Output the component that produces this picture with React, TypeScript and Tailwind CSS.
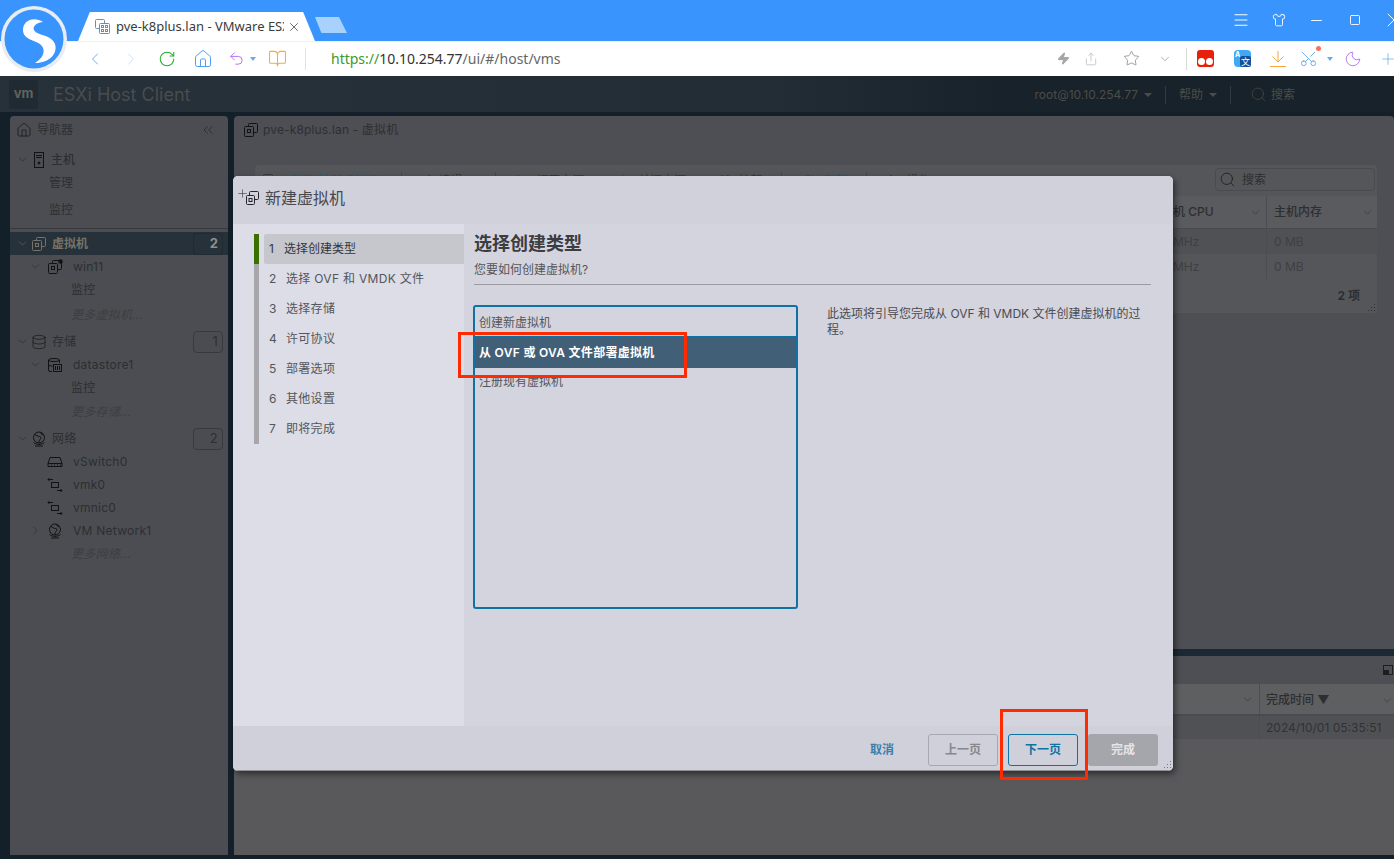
import type { ReactNode } from "react";
import { ChevronDown, ChevronRight, ChevronLeft, RotateCw, House, BookOpen, Undo2, Zap, Share, Star, Scissors, Moon, Plus, Menu, Shirt, Minus, Square, X, Search, ChevronsLeft, Database, Play, Pencil, Pause, Power } from "lucide-react";

const sans = "font-['Inter','Noto_Sans_CJK_SC',sans-serif]";

function VmIcon({ dot, size = 16 }: { dot?: boolean; size?: number }) {
  return (
    <svg width={size} height={size} viewBox="0 0 16 16" fill="none" stroke="currentColor" strokeWidth="1" className="shrink-0">
      <path d="M5.5 4V2.5a1 1 0 0 1 1-1h7a1 1 0 0 1 1 1v7a1 1 0 0 1-1 1H11" />
      <rect x="1.5" y="4.5" width="9" height="10" rx="1" />
      <rect x="4.5" y="7.5" width="3" height="3" />
      {dot && <circle cx="13.5" cy="2.5" r="2.2" fill="currentColor" stroke="none" />}
    </svg>
  );
}

function HostIcon() {
  return (
    <svg width="16" height="16" viewBox="0 0 16 16" fill="none" stroke="currentColor" strokeWidth="1" className="shrink-0">
      <rect x="3.5" y="0.5" width="9" height="15" />
      <path d="M5 3.5h6M5 5.5h6" />
      <circle cx="8" cy="11" r="1" fill="currentColor" />
    </svg>
  );
}

function GlobeIcon() {
  return (
    <svg width="16" height="16" viewBox="0 0 16 16" fill="none" stroke="currentColor" strokeWidth="1" className="shrink-0">
      <circle cx="8" cy="6.5" r="5.5" />
      <path d="M3.5 3.5c2 .5 3 2 5 2s1.5 2 .5 3-1 2-1 3.5M10 1.5c-.5 1 .5 2 2 2.5" />
      <path d="M2.5 11.5c3 2.5 8 2.5 11 0M4 15h8" />
    </svg>
  );
}

function DatastoreIcon() {
  return (
    <svg width="16" height="16" viewBox="0 0 16 16" fill="none" stroke="currentColor" strokeWidth="1" className="shrink-0">
      <path d="M5 14.5H3a1.5 1.5 0 0 1-1.5-1.5V3C1.500 1 12.500 1 12.500 3v3" />
      <path d="M1.500 3c0 2 11 2 11 0M1.500 7.500c0 1 2 1.500 4 1.700" />
      <rect x="6.500" y="7.500" width="8" height="7" />
      <path d="M8.500 9v4M10.500 9v4M12.500 9v4" />
    </svg>
  );
}

function PortIcon() {
  return (
    <svg width="16" height="16" viewBox="0 0 16 16" fill="none" stroke="currentColor" strokeWidth="1" className="shrink-0">
      <rect x="4.500" y="5.500" width="7" height="5" />
      <path d="M1 2.500h5M1 2.500l1.500-1.500M1 2.500l1.500 1.500M10 13.500h5M15 13.500l-1.500-1.500M15 13.500l-1.500 1.500" />
    </svg>
  );
}

function SwitchIcon() {
  return (
    <svg width="16" height="14" viewBox="0 0 16 14" fill="none" stroke="currentColor" strokeWidth="1" className="shrink-0">
      <path d="M3 2.500h10l2 6v3H1v-3z M1 8.500h14" />
      <path d="M4 10h1M7 10h1M10 10h1M13 10h1" />
    </svg>
  );
}

function ResizeDots({ className }: { className: string }) {
  return (
    <svg width="8" height="8" viewBox="0 0 8 8" fill="currentColor" className={className}>
      <rect x="6" y="0" width="1" height="1" />
      <rect x="3" y="3" width="1" height="1" />
      <rect x="6" y="3" width="1" height="1" />
      <rect x="0" y="6" width="1" height="1" />
      <rect x="3" y="6" width="1" height="1" />
      <rect x="6" y="6" width="1" height="1" />
    </svg>
  );
}

function Count({ n, active }: { n: number; active?: boolean }) {
  return (
    <span className={`w-[30px] h-[22px] rounded border text-[13px] flex items-center justify-end pr-1 ${active ? "border-[#1f2a32] bg-[#263139] text-[#8f8f8f] font-bold" : "border-[#38393d] bg-[#4b4c51] text-[#2e2e30]"}`}>
      {n}
    </span>
  );
}

function Row({ className = "", children }: { className?: string; children: ReactNode }) {
  return <div className={`h-[23px] flex items-center text-[12px] tracking-[0.25px] text-[#2d2e31] ${className}`}>{children}</div>;
}

function Navigator() {
  const caret = "shrink-0 text-[#1f2023]";
  return (
    <aside className="w-[218px] shrink-0 bg-[#4c4d52] rounded-t-sm flex flex-col pt-[3px] text-[#2d2e31]">
      <div className="h-[21px] flex items-center pl-[6px] pr-3 text-[12px] gap-[5px]">
        <House size={16} strokeWidth={1.2} className="text-[#17181a]" />
        <span>导航器</span>
        <ChevronsLeft size={16} strokeWidth={1} className="ml-auto text-[#1f2023]" />
      </div>
      <div className="mt-[8px] h-[23px] flex items-center pl-[6px] text-[12px]">
        <ChevronDown size={13} strokeWidth={1} className={caret} />
        <span className="ml-[2px] text-[#111214]"><HostIcon /></span>
        <span className="ml-[4px] font-medium">主机</span>
      </div>
      <div className="pl-[39px] text-[12px] h-[24px] flex items-center">管理</div>
      <div className="pl-[39px] text-[12px] h-[30px] flex items-center">监控</div>
      <div className="border-t border-[#38393d] mt-[3px]" />
      <div className="mt-[3px] h-[23px] bg-[#263139] flex items-center pl-[6px] pr-[5px] text-[12px] text-[#76736a] font-bold">
        <ChevronDown size={13} strokeWidth={1} className="shrink-0" />
        <span className="ml-[2px]"><VmIcon /></span>
        <span className="ml-[5px]">虚拟机</span>
        <span className="ml-auto"><Count n={2} active /></span>
      </div>
      <Row className="pl-[19px]">
        <ChevronDown size={13} strokeWidth={1} className={caret} />
        <span className="ml-[5px] text-[#111214]"><VmIcon dot /></span>
        <span className="ml-[10px]">win11</span>
      </Row>
      <Row className="pl-[61px] h-[24px]">监控</Row>
      <Row className="pl-[61px] h-[26px] mb-[2px] italic text-[#3d3e42]">更多虚拟机...</Row>
      <Row className="pl-[6px] pr-[5px]">
        <ChevronDown size={13} strokeWidth={1} className={caret} />
        <Database size={16} strokeWidth={1} className="ml-[2px] text-[#111214]" />
        <span className="ml-[5px]">存储</span>
        <span className="ml-auto"><Count n={1} /></span>
      </Row>
      <Row className="pl-[19px]">
        <ChevronDown size={13} strokeWidth={1} className={caret} />
        <span className="ml-[5px] text-[#111214]"><DatastoreIcon /></span>
        <span className="ml-[10px]">datastore1</span>
      </Row>
      <Row className="pl-[61px]">监控</Row>
      <Row className="pl-[61px] h-[26px] mb-[2px] italic text-[#3d3e42]">更多存储...</Row>
      <Row className="pl-[6px] pr-[5px]">
        <ChevronDown size={13} strokeWidth={1} className={caret} />
        <span className="ml-[2px] text-[#111214]"><GlobeIcon /></span>
        <span className="ml-[5px]">网络</span>
        <span className="ml-auto"><Count n={2} /></span>
      </Row>
      <Row className="pl-[37px]"><span className="text-[#111214]"><SwitchIcon /></span><span className="ml-[10px]">vSwitch0</span></Row>
      <Row className="pl-[37px]"><span className="text-[#111214]"><PortIcon /></span><span className="ml-[10px]">vmk0</span></Row>
      <Row className="pl-[37px]"><span className="text-[#111214]"><PortIcon /></span><span className="ml-[10px]">vmnic0</span></Row>
      <Row className="pl-[19px]">
        <ChevronRight size={13} strokeWidth={1} className={caret} />
        <span className="ml-[5px] text-[#111214]"><GlobeIcon /></span>
        <span className="ml-[10px]">VM Network1</span>
      </Row>
      <Row className="pl-[61px] italic text-[#3d3e42]">更多网络...</Row>
    </aside>
  );
}

function Sep({ className }: { className: string }) {
  return <span className={`w-px h-[18px] bg-[#47484c] shrink-0 ${className}`} />;
}

function Toolbar() {
  return (
    <div className="h-[31px] bg-[#55565a] flex items-center text-[12px] text-[#38393c] rounded-t-sm pl-[3px] whitespace-nowrap">
      <VmIcon />
      <span className="ml-[16px] text-[#245a78]">创建/注册虚拟机</span>
      <Sep className="ml-[23px]" />
      <Pencil size={14} strokeWidth={1} className="ml-[16px]" />
      <span className="ml-[6px]">编辑</span>
      <Sep className="ml-[33px]" />
      <Play size={14} strokeWidth={1} className="ml-[18px] fill-current" />
      <span className="ml-[8px]">打开电源</span>
      <Power size={14} strokeWidth={1} className="ml-[32px]" />
      <span className="ml-[8px]">关闭电源</span>
      <Pause size={14} strokeWidth={1} className="ml-[32px] fill-current" />
      <span className="ml-[6px]">挂起</span>
      <Sep className="ml-[19px]" />
      <RotateCw size={14} strokeWidth={1} className="ml-[19px]" />
      <span className="ml-[8px] text-[#245a78]">刷新</span>
      <Sep className="ml-[19px]" />
      <Star size={14} strokeWidth={1} className="ml-[17px] fill-current" />
      <span className="ml-[8px]">操作</span>
      <div className="ml-auto mr-[2px] mb-[2px] w-[160px] h-[23px] border border-[#4a4b4f] rounded-sm flex items-center pl-[3px] gap-[6px] text-[#2d2e31]">
        <Search size={17} strokeWidth={1} className="text-[#111214]" />
        <span>搜索</span>
      </div>
    </div>
  );
}

function Background() {
  return (
    <main className="flex-1 bg-[#4e4f54] rounded-t-sm flex flex-col text-[#2d2e31]">
      <div className="h-[49px] flex items-start gap-[4px] pt-[6px] pl-[9px] text-[12px]">
        <span className="text-[#111214]"><VmIcon /></span>
        <span className="leading-[16px] tracking-[0.15px]">pve-k8plus.lan - 虚拟机</span>
      </div>
      <div className="ml-[21px] mr-[17px] bg-[#55565a] rounded-sm text-[12px] relative">
        <Toolbar />
        <div className="h-[33px] bg-[#5a5b5e] border-b border-[#4a4b4f] flex items-center justify-end font-medium">
          <div className="w-[130px] h-full flex items-center pl-[25px]">
            <span>主机 CPU</span>
            <ChevronDown size={13} strokeWidth={1} className="ml-auto mr-[4px]" />
          </div>
          <div className="w-[111px] border-l border-[#4c4d52] h-full flex items-center pl-[7px]">
            <span>主机内存</span>
            <ChevronDown size={13} strokeWidth={1} className="ml-auto mr-[3px]" />
          </div>
        </div>
        <div className="h-[25px] bg-[#505155] flex items-center justify-end text-[#3f4043]">
          <span className="w-[130px] pl-[26px]">0 MHz</span>
          <span className="w-[111px] h-full flex items-center border-l border-[#4c4d52] pl-[7px]">0 MB</span>
        </div>
        <div className="h-[25px] bg-[#55565a] flex items-center justify-end text-[#3f4043]">
          <span className="w-[130px] pl-[26px]">0 MHz</span>
          <span className="w-[111px] h-full flex items-center border-l border-[#4c4d52] pl-[7px]">0 MB</span>
        </div>
        <div className="h-[34px] flex items-center justify-end pr-[17px] font-bold">2 项</div>
        <ResizeDots className="absolute right-[1px] bottom-[1px] text-[#2d2e31]" />
      </div>
      <div className="h-[343px] border-b-[7px] border-[#1a2933]" />
      <div className="flex-1 flex flex-col">
        <div className="h-[28px] flex items-center justify-end pr-[1px]">
          <span className="w-[10px] h-[10px] border border-[#1d1e20] flex items-end">
            <span className="w-[5px] h-[4px] bg-[#1d1e20]" />
          </span>
        </div>
        <div className="h-[32px] bg-[#5e5f61] border-b-2 border-[#4a4b4f] flex items-center justify-end text-[12px] font-medium">
          <ChevronDown size={13} strokeWidth={1} className="mr-[5px]" />
          <div className="w-[135px] pl-[6px] pt-[2px] border-l border-[#4c4d52] h-full flex items-center">
            <span>完成时间 ▼</span>
            <ChevronDown size={13} strokeWidth={1} className="ml-auto" />
          </div>
        </div>
        <div className="h-[23px] bg-[#505155] flex justify-end text-[12px] items-center text-[#303134]">
          <span className="w-[135px] pl-[6px] border-l border-[#4c4d52] h-full flex items-center whitespace-nowrap">2024/10/01 05:35:51</span>
        </div>
        <div className="flex-1 bg-[#59595b]" />
      </div>
    </main>
  );
}

const steps = ["选择创建类型", "选择 OVF 和 VMDK 文件", "选择存储", "许可协议", "部署选项", "其他设置", "即将完成"];

function Wizard() {
  return (
    <div className="absolute left-[233px] top-[176px] w-[940px] h-[595px] bg-[#d3d4de] rounded-[5px] shadow-[2px_3px_6px_rgba(0,0,0,0.5)] flex flex-col overflow-hidden text-[#3f3f44]">
      <div className="h-[48px] shrink-0 bg-[#d0d1db] flex items-center pl-[3px] gap-[5px] pb-[4px] text-[16px] text-[#48484d]">
        <span className="relative w-[24px] h-[24px] text-[#26262a]">
          <Plus size={13} strokeWidth={1} className="absolute left-0 top-[1px]" />
          <svg width="16" height="16" viewBox="0 0 16 16" fill="none" stroke="currentColor" className="absolute left-[9px] top-[4px]">
            <rect x="4.500" y="1.500" width="9" height="8" rx="1" />
            <rect x="1.500" y="5.500" width="8" height="9" rx="1" fill="#d0d1db" />
            <rect x="4" y="8.500" width="3" height="3" />
          </svg>
        </span>
        <span>新建虚拟机</span>
      </div>
      <div className="flex flex-1 min-h-0">
        <div className="w-[231px] shrink-0 bg-[#dcdde6] pt-[10px] pl-[21px]">
          <ol className="text-[12px] text-[#55555a]">
            {steps.map((s, i) => (
              <li key={s} className={`h-[30px] flex border-l-[5px] ${i === 0 ? "border-[#3a7000]" : "border-[#a7a7ab]"}`}>
                <div className={`ml-[5px] flex-1 flex items-center pl-[5px] rounded-l-[2px] ${i === 0 ? "bg-[#c6c7cc] text-[#35353a]" : ""}`}>
                  <span className={i === 0 ? "w-[15px]" : "w-[17px]"}>{i + 1}</span>
                  <span className={i === 0 ? "" : "tracking-[0.3px]"}>{s}</span>
                </div>
              </li>
            ))}
          </ol>
        </div>
        <div className="flex-1 pl-[10px] pr-[23px] pt-[9px]">
          <h2 className="text-[18px] font-bold leading-[22px] text-[#3c3c41]">选择创建类型</h2>
          <p className="text-[12px] leading-[16px] mt-[7px] text-[#55555a]">您要如何创建虚拟机?</p>
          <div className="border-t border-[#9a9aa0] mt-[6px]" />
          <div className="flex mt-[20px] gap-[29px] -ml-[1px]">
            <div className="w-[325px] h-[304px] border-2 border-[#0f72a5] rounded-[3px] text-[12px] pt-[3px] shrink-0">
              <div className="h-[26px] flex items-center pl-[4px] text-[#55555a]">创建新虚拟机</div>
              <div className="h-[32px] flex items-center pl-[4px] bg-[#425f78] border-y border-[#0f72a5] text-white font-semibold tracking-[0.3px] pt-[1px]">从 OVF 或 OVA 文件部署虚拟机</div>
              <div className="h-[28px] flex items-center pl-[4px] text-[#55555a]">注册现有虚拟机</div>
            </div>
            <p className="text-[12px] leading-[16px] pt-[1px] text-[#4b4b50] w-[324px]">此选项将引导您完成从 OVF 和 VMDK 文件创建虚拟机的过程。</p>
          </div>
        </div>
      </div>
      <div className="h-[45px] shrink-0 bg-[#cfd0da] flex items-start justify-end pr-[15px] pt-[8px] text-[12px] font-semibold relative border-b border-[#8f8f94]">
        <span className="h-[32px] flex items-center mr-[34px] text-[#3a80ac]">取消</span>
        <span className="w-[70px] h-[32px] rounded-[3px] border border-[#a7a8ae] text-[#87878d] flex items-center justify-center mr-[10px]">上一页</span>
        <span className="w-[70px] h-[32px] rounded-[3px] border border-[#0f72a5] text-[#0f72a5] flex items-center justify-center mr-[10px]">下一页</span>
        <span className="w-[70px] h-[32px] rounded-[3px] bg-[#a5a6ab] text-[#e4e4e8] flex items-center justify-center">完成</span>
        <ResizeDots className="absolute right-[1px] bottom-[1px] text-[#77787c]" />
      </div>
    </div>
  );
}

function SogouLogo() {
  return (
    <svg width="68" height="70" viewBox="0 0 68 70" className="absolute left-0 top-[3px]">
      <circle cx="34" cy="36" r="33" fill="#e9edf2" />
      <circle cx="34" cy="36" r="29.500" fill="#3995fd" />
      <path d="M43 19 C34 13 23 17 23 27 C23 37 36 37 41 42 C47 48 42 56 35 60 C50 60 58 50 55 41 C51 31 37 33 34 27 C32 23 38 19 43 19Z" fill="#fff" />
    </svg>
  );
}

function Chrome() {
  return (
    <div className="shrink-0 relative">
      <div className="h-[41px] bg-[#3995fd] flex items-end relative overflow-hidden">
        <div className="ml-[78px] w-[237px] h-[29px] bg-white [clip-path:polygon(5%_0,95%_0,100%_100%,0_100%)] flex items-center pl-[16px] text-[13px] text-[#3b3b3b] font-['Noto_Sans','Noto_Sans_CJK_SC',sans-serif]">
          <svg width="17" height="17" viewBox="0 0 17 17" fill="none" stroke="#5f90c4" className="shrink-0 mr-[5px]">
            <rect x="1.500" y="1.500" width="9" height="9" rx="1" /><rect x="5.500" y="5.500" width="10" height="10" rx="1" fill="#fff" />
            <rect x="7.500" y="7.500" width="2" height="2" /><rect x="11.500" y="7.500" width="2" height="2" /><rect x="7.500" y="11.500" width="2" height="2" /><rect x="11.500" y="11.500" width="2" height="2" />
          </svg>
          <span className="w-[168px] overflow-hidden whitespace-nowrap shrink-0">pve-k8plus.lan - VMware ESXi</span>
          <X size={14} strokeWidth={1.3} className="ml-[3px] shrink-0" />
        </div>
        <div className="ml-[0px] mb-[8px] w-[32px] h-[16px] bg-[#a9d1fd] [clip-path:polygon(0_0,75%_0,100%_100%,20%_100%)]" />
        <div className="ml-auto self-start mt-[11px] -mr-[12px] h-[18px] flex items-center text-white">
          <Menu size={18} strokeWidth={1.3} />
          <Shirt size={14} strokeWidth={1.5} className="ml-[22px]" />
          <Minus size={17} strokeWidth={1.3} className="ml-[22px]" />
          <Square size={12} strokeWidth={1.8} className="ml-[24px]" />
          <X size={24} strokeWidth={1} className="ml-[21px]" />
        </div>
      </div>
      <div className="h-[35px] bg-white flex items-center border-t border-[#e8f2ff] relative pb-[1px] overflow-hidden">
        <ChevronLeft size={20} strokeWidth={1.2} className="ml-[85px] text-[#6fb0f5]" />
        <ChevronRight size={20} strokeWidth={1.2} className="ml-[16px] text-[#c8e0fb]" />
        <RotateCw size={18} strokeWidth={1.4} className="ml-[17px] text-[#22b02e]" />
        <House size={20} strokeWidth={1.2} className="ml-[17px] text-[#4da0f7]" />
        <Undo2 size={17} strokeWidth={1.4} className="ml-[15px] text-[#b76ff0]" />
        <span className="ml-[5px] w-0 h-0 border-x-[3px] border-x-transparent border-t-[4px] border-t-[#6fa8e6]" />
        <BookOpen size={19} strokeWidth={1.3} className="ml-[12px] text-[#f4a948]" />
        <span className="ml-[18px] w-px h-[22px] bg-[#e2e2e2]" />
        <span className="ml-[25px] text-[14px] font-['Noto_Sans',sans-serif] text-[#333]">
          <span className="text-[#3a9a2e]">https://</span>10.10.254.77<span className="text-[#666]">/ui/#/host/vms</span>
        </span>
        <div className="ml-auto -mr-[3px] flex items-center">
          <Zap size={13} className="text-[#a5a5a5] fill-[#a5a5a5]" />
          <Share size={14} strokeWidth={1} className="ml-[14px] text-[#a5a5a5]" />
          <Star size={17} strokeWidth={1} className="ml-[25px] text-[#777]" />
          <ChevronDown size={14} strokeWidth={1} className="ml-[18px] text-[#777]" />
          <span className="ml-[14px] w-px h-[22px] bg-[#d9d9d9]" />
          <span className="ml-[10px] w-[17px] h-[17px] bg-[#e8200a] rounded-[3px] flex items-end justify-center gap-[1px] pb-[2px]">
            <span className="w-[7px] h-[7px] rounded-full bg-white" /><span className="w-[7px] h-[7px] rounded-full bg-white" />
          </span>
          <span className="ml-[20px] relative w-[17px] h-[17px] rounded-[4px] bg-[#3fa9f5]">
            <span className="absolute left-[1px] top-[1px] text-white text-[7px] leading-none font-bold">A</span>
            <span className="absolute right-0 bottom-0 w-[11px] h-[11px] rounded-[2px] bg-[#14509b] text-white text-[9px] leading-[11px] text-center">文</span>
          </span>
          <svg width="18" height="18" viewBox="0 0 18 18" fill="none" stroke="#f7a63a" strokeWidth="1" className="ml-[18px]">
            <path d="M9 1v11M3.500 6.500 9 12l5.500-5.500M1 16.500h16" />
          </svg>
          <span className="relative ml-[12px]">
            <Scissors size={19} strokeWidth={1.1} className="text-[#5ba5ef] -rotate-90" />
            <span className="absolute -right-[3px] -top-[3px] w-[5px] h-[5px] rounded-full bg-[#fb6f5f]" />
          </span>
          <span className="ml-[9px] w-0 h-0 border-x-[3px] border-x-transparent border-t-[4px] border-t-[#6fa8e6]" />
          <Moon size={18} strokeWidth={1.2} className="ml-[11px] text-[#b06ff0]" />
          <Plus size={18} strokeWidth={1} className="ml-[17px] text-[#6fa8e6]" />
        </div>
      </div>
      <SogouLogo />
    </div>
  );
}

function AppHeader() {
  return (
    <header className="h-[36px] shrink-0 bg-[linear-gradient(90deg,#27313a,#232d36_55%,#17222b_72%)] flex items-center text-[#4e4c47] text-[12px]">
      <span className="ml-[9px] w-[29px] h-[29px] rounded-[2px] bg-[#1f2a32] text-[#62625e] font-bold text-[13px] flex items-center justify-center">vm</span>
      <span className="ml-[15px] text-[18px] text-[#4a4c4d]">ESXi Host Client</span>
      <div className="ml-auto flex items-center h-full pt-[1px]">
        <span>root@10.10.254.77</span>
        <span className="ml-[6px] w-0 h-0 border-x-[4px] border-x-transparent border-t-[4px] border-t-[#4e4c47]" />
        <span className="ml-[13px] w-px h-[18px] bg-[#33393e]" />
        <span className="ml-[13px]">帮助</span>
        <span className="ml-[6px] w-0 h-0 border-x-[4px] border-x-transparent border-t-[4px] border-t-[#4e4c47]" />
        <span className="ml-[13px] w-px h-[18px] bg-[#33393e]" />
        <Search size={17} strokeWidth={1} className="ml-[19px]" />
        <span className="ml-[4px] mr-[99px]">搜索</span>
      </div>
    </header>
  );
}

export default function App() {
  return (
    <div className={`relative w-[1394px] h-[859px] overflow-hidden flex flex-col bg-[#132029] ${sans}`}>
      <Chrome />
      <AppHeader />
      <div className="flex-1 min-h-0 flex gap-[6px] pl-[10px] pt-[4px] pb-[4px]">
        <Navigator />
        <Background />
      </div>
      <Wizard />
      <div className="absolute left-[458px] top-[332px] w-[229px] h-[46px] border-[3px] border-[#ff2a00]" />
      <div className="absolute left-[1000px] top-[709px] w-[88px] h-[71px] border-[3px] border-[#ff2a00]" />
    </div>
  );
}
